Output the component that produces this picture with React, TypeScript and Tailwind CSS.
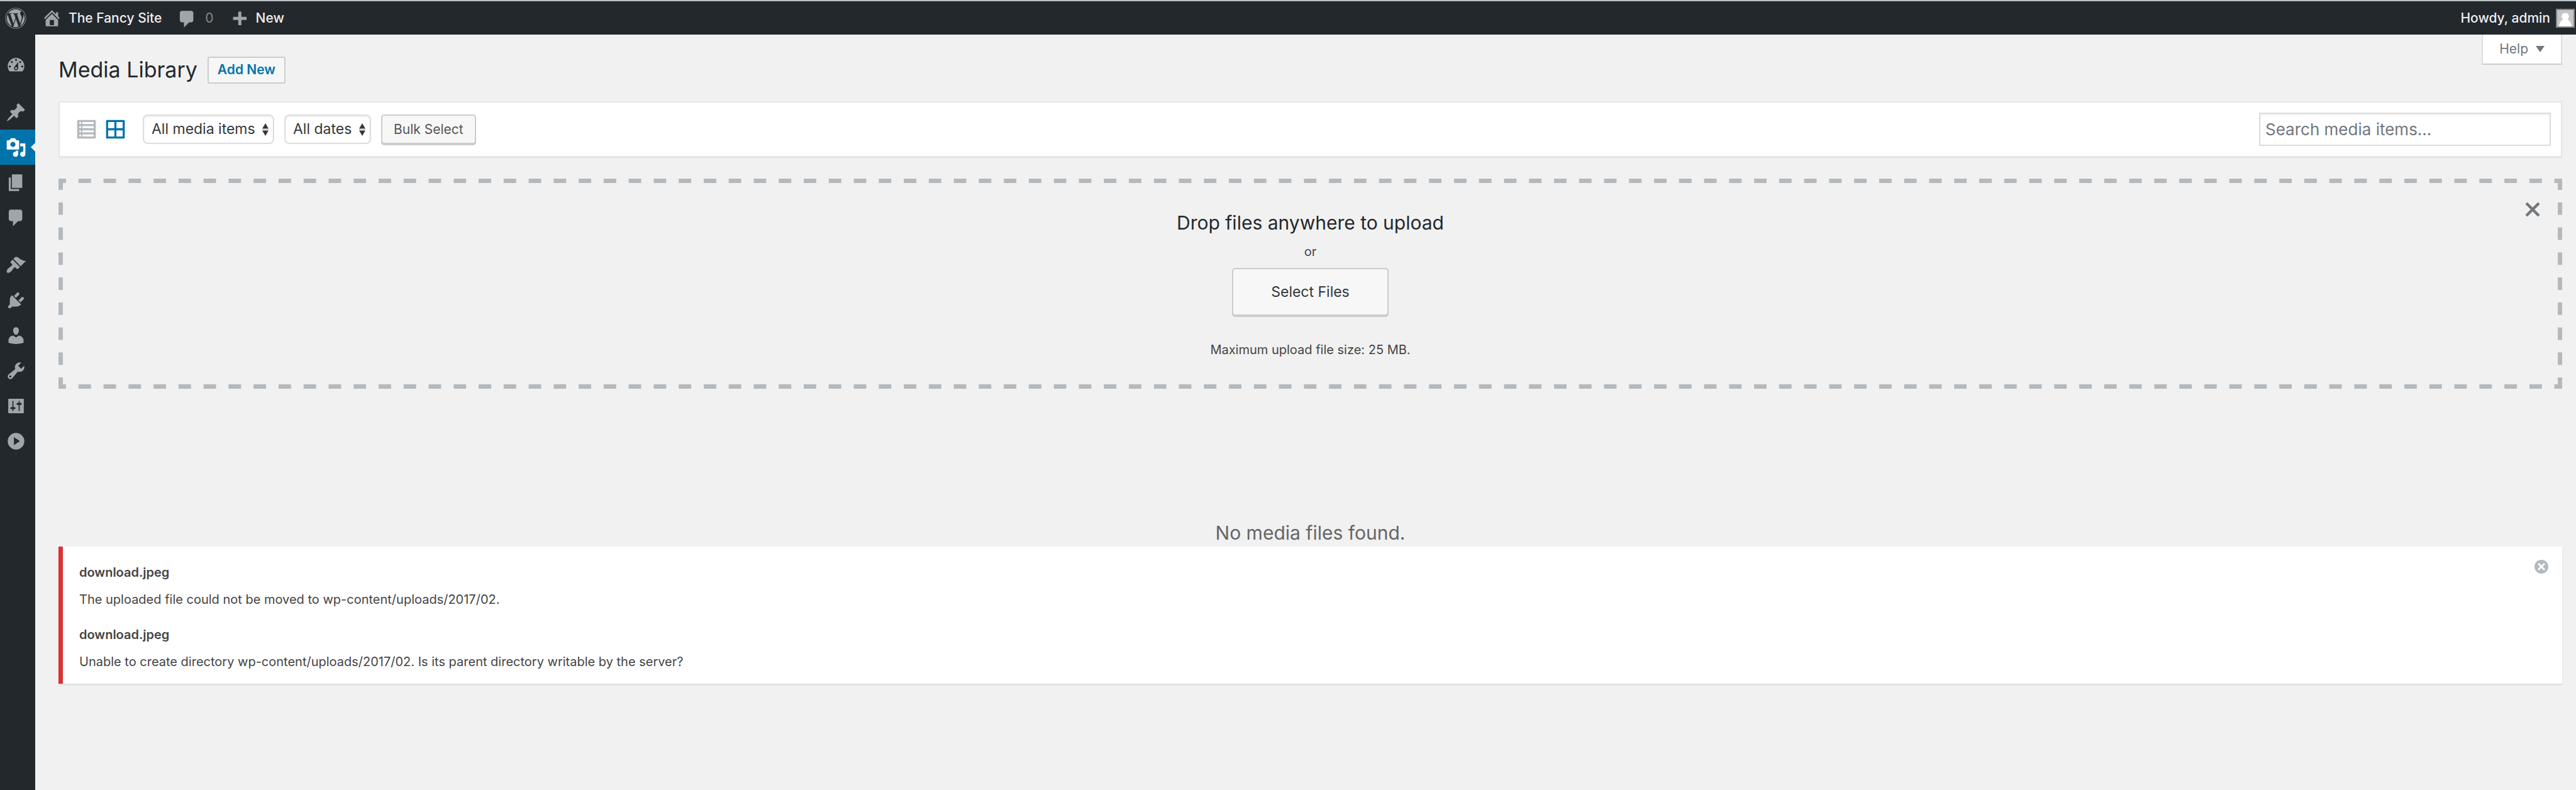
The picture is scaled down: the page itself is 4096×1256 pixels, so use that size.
import React from "react";
import { FaWordpress } from "react-icons/fa";

const icons = {
  home: "M16 8.5l1.53 1.53-1.06 1.06L10 4.6l-6.47 6.49-1.06-1.06L10 2.5l4 4v-2h2v4zm-6-2.46l6 5.99V18H4v-5.97zM12 17v-5H8v5h4z",
  plus: "M17 9v3h-5v5H9v-5H4V9h5V4h3v5h5z",
  dashboard:
    "M3.8 16h12.4c1.1-1.3 1.8-3 1.8-5 0-4.4-3.6-8-8-8s-8 3.6-8 8c0 2 .7 3.7 1.8 5zM10 4c.55 0 1 .45 1 1s-.45 1-1 1-1-.45-1-1 .45-1 1-1zM6 6c.55 0 1 .45 1 1s-.45 1-1 1-1-.45-1-1 .45-1 1-1zm8 0c.55 0 1 .45 1 1s-.45 1-1 1-1-.45-1-1 .45-1 1-1zm-5.37 5.55L12 7v6c0 1.1-.9 2-2 2s-2-.9-2-2c0-.57.24-1.08.63-1.45zM4 10.3c.55 0 1 .45 1 1s-.45 1-1 1-1-.45-1-1 .45-1 1-1zm12 0c.55 0 1 .45 1 1s-.45 1-1 1-1-.45-1-1 .45-1 1-1zm-5 2.7c0-.55-.45-1-1-1s-1 .45-1 1 .45 1 1 1 1-.45 1-1z",
  pin: "M10.44 3.02l1.82-1.82 6.36 6.35-1.83 1.82c-1.05-.68-2.48-.57-3.41.36l-.75.75c-.92.93-1.04 2.35-.35 3.41l-1.83 1.82-2.41-2.41-2.8 2.79c-.42.42-3.38 2.71-3.8 2.29s1.86-3.39 2.28-3.81l2.79-2.79L4.1 9.36l1.83-1.82c1.05.69 2.48.57 3.4-.36l.75-.75c.93-.92 1.05-2.35.36-3.41z",
  media:
    "M13 11V4c0-.55-.45-1-1-1h-1.67L9 1H5L3.67 3H2c-.55 0-1 .45-1 1v7c0 .55.45 1 1 1h10c.55 0 1-.45 1-1zM7 4.5c1.38 0 2.5 1.12 2.5 2.5S8.38 9.5 7 9.5 4.5 8.38 4.5 7 5.62 4.5 7 4.5zM14 6h5v10.5c0 1.38-1.12 2.5-2.5 2.5S14 17.88 14 16.5s1.12-2.5 2.5-2.5c.17 0 .34.02.5.05V9h-3V6zm-4 8.05V13h2v3.5c0 1.38-1.12 2.5-2.5 2.5S7 17.88 7 16.5 8.12 14 9.5 14c.17 0 .34.02.5.05z",
  page: "M6 15V2h10v13H6zm-1 1h8v2H3V5h2v11z",
  comment:
    "M5 2h9c1.1 0 2 .9 2 2v7c0 1.1-.9 2-2 2h-2l-5 5v-5H5c-1.1 0-2-.9-2-2V4c0-1.1.9-2 2-2z",
  appearance:
    "M14.48 11.06L7.41 3.99l1.5-1.5c.5-.56 2.3-.47 3.51.32 1.21.8 1.43 1.28 2.91 2.1 1.18.64 2.45 1.26 4.45.85zm-.71.71L6.7 4.7 4.93 6.47c-.39.39-.39 1.02 0 1.41l1.06 1.06c.39.39.39 1.03 0 1.42-.6.6-1.43 1.11-2.21 1.69-.35.26-.7.53-1.01.84C1.43 14.23.4 16.08 1.4 17.07c.99 1 2.84-.03 4.18-1.36.31-.31.58-.66.85-1.02.57-.78 1.08-1.61 1.69-2.21.39-.39 1.02-.39 1.41 0l1.06 1.06c.39.39 1.02.39 1.41 0z",
  plugins:
    "M13.11 4.36L9.87 7.6 8 5.73l3.24-3.24c.35-.34 1.05-.2 1.56.32.52.51.66 1.21.31 1.55zm-8 1.77l.91-1.12 9.01 9.01-1.19.84c-.71.71-2.63 1.16-3.82 1.16H6.14L4.9 17.26c-.59.59-1.54.59-2.12 0-.59-.58-.59-1.53 0-2.12l1.24-1.24v-3.88c0-1.13.4-3.19 1.09-3.89zm7.26 3.97l3.24-3.24c.34-.35 1.04-.21 1.55.31.52.51.66 1.21.31 1.55l-3.24 3.25z",
  users:
    "M10 9.25c-2.27 0-2.73-3.44-2.73-3.44C7 4.02 7.82 2 9.97 2c2.16 0 2.98 2.02 2.71 3.81 0 0-.41 3.44-2.68 3.44zm0 2.57L12.72 10c2.39 0 4.52 2.33 4.52 4.53v2.49s-3.65 1.13-7.24 1.13c-3.65 0-7.24-1.13-7.24-1.13v-2.49c0-2.25 1.94-4.48 4.47-4.48z",
  tools:
    "M16.68 9.77c-1.34 1.34-3.3 1.67-4.95.99l-5.41 6.52c-.99.99-2.59.99-3.58 0s-.99-2.59 0-3.57l6.52-5.42c-.68-1.65-.35-3.61.99-4.95 1.28-1.28 3.12-1.62 4.72-1.06l-2.89 2.89 2.82 2.82 2.86-2.87c.53 1.58.18 3.39-1.08 4.65zM3.81 16.21c.4.39 1.04.39 1.43 0 .4-.4.4-1.04 0-1.43-.39-.4-1.03-.4-1.43 0-.39.39-.39 1.03 0 1.43z",
  settings:
    "M17.5 16.3V3.7c0-.4-.3-.7-.7-.7H3.2c-.4 0-.7.3-.7.7v12.6c0 .4.3.7.7.7h13.6c.4 0 .7-.3.7-.7zM7.5 11H8.3c.7 0 1.2.45 1.2 1s-.5 1-1.2 1H7.5v1.5c0 .28-.22.5-.5.5s-.5-.22-.5-.5V13H5.7c-.7 0-1.2-.45-1.2-1s.5-1 1.2-1h.8V5.5c0-.28.22-.5.5-.5s.5.22.5.5V11zm5-2h-.8c-.7 0-1.2-.45-1.2-1s.5-1 1.2-1h.8V5.5c0-.28.22-.5.5-.5s.5.22.5.5V7h.8c.7 0 1.2.45 1.2 1s-.5 1-1.2 1h-.8v5.5c0 .28-.22.5-.5.5s-.5-.22-.5-.5V9z",
  collapse: "M10 2a8 8 0 100 16 8 8 0 000-16zM8 6l5.7 3.9L8 13.8z",
  list: "M2 1h16c.6 0 1 .4 1 1v16c0 .6-.4 1-1 1H2c-.6 0-1-.4-1-1V2c0-.6.4-1 1-1zM6 3v2h11V3zM6 7v2h11V7zM6 11v2h11v-2zM6 15v2h11v-2zM4 3a1 1 0 100 2 1 1 0 000-2zM4 7a1 1 0 100 2 1 1 0 000-2zM4 11a1 1 0 100 2 1 1 0 000-2zM4 15a1 1 0 100 2 1 1 0 000-2z",
  grid: "M2 1h16c.6 0 1 .4 1 1v16c0 .6-.4 1-1 1H2c-.6 0-1-.4-1-1V2c0-.6.4-1 1-1zM3 3v6h6V3zM11 3v6h6V3zM3 11v6h6v-6zM11 11v6h6v-6z",
};

type IconName = keyof typeof icons;

function Icon({ name }: { name: IconName }) {
  return (
    <svg viewBox="0 0 20 20" className="size-[33px] shrink-0 fill-current" aria-hidden="true">
      <path fillRule="evenodd" d={icons[name]} />
    </svg>
  );
}

const menuGroups: { name: IconName; label: string }[][] = [
  [{ name: "dashboard", label: "Dashboard" }],
  [
    { name: "pin", label: "Posts" },
    { name: "media", label: "Media" },
    { name: "page", label: "Pages" },
    { name: "comment", label: "Comments" },
  ],
  [
    { name: "appearance", label: "Appearance" },
    { name: "plugins", label: "Plugins" },
    { name: "users", label: "Users" },
    { name: "tools", label: "Tools" },
    { name: "settings", label: "Settings" },
    { name: "collapse", label: "Expand menu" },
  ],
];

function AdminBar() {
  return (
    <header className="flex h-[55px] items-center justify-between border-t-2 border-[#bcc2c6] bg-[#23282d] pl-2 pr-[2px] text-[21px] font-medium text-[#eee]">
      <nav aria-label="Toolbar" className="flex items-center">
        <a href="#wp" aria-label="About WordPress" className="text-[#a0a5aa]">
          <FaWordpress className="size-[34px]" />
        </a>
        <a href="#site" className="ml-6 flex items-center gap-[10px]">
          <span className="text-[#a0a5aa]"><Icon name="home" /></span>
          The Fancy Site
        </a>
        <a href="#comments" aria-label="0 comments" className="ml-6 flex items-center gap-3 text-[#82878c]">
          <span className="pt-1 text-[#a0a5aa]"><Icon name="comment" /></span>
          <span className="font-normal">0</span>
        </a>
        <a href="#new" className="ml-6 flex items-center gap-[10px]">
          <span className="text-[#a0a5aa]"><Icon name="plus" /></span>
          New
        </a>
      </nav>
      <a href="#profile" className="flex items-center gap-[9px]">
        Howdy, admin
        <svg viewBox="0 0 30 30" className="size-[30px]" aria-hidden="true">
          <rect width="30" height="30" fill="#82878c" />
          <rect x="2" y="2" width="26" height="26" fill="#c6c6c6" />
          <circle cx="15" cy="12.200" r="5.800" fill="#fff" />
          <path fill="#fff" d="M11.500 17h7c3.400 1.600 6 5.400 6.700 11H4.800c.7-5.600 3.300-9.400 6.700-11z" />
        </svg>
      </a>
    </header>
  );
}

function Sidebar() {
  return (
    <nav aria-label="Main menu" className="flex w-14 shrink-0 flex-col gap-[19px] bg-[#23282d] pt-5">
      {menuGroups.map((group, i) => (
        <ul key={i}>
          {group.map(({ name, label }) => (
            <li key={name}>
              <a
                href={"#" + name}
                aria-label={label}
                className={
                  name === "media"
                    ? "relative flex h-14 items-center bg-[#0073aa] pl-[9px] text-white"
                    : "flex h-14 items-center pl-[9px] text-[#a0a5aa]"
                }
              >
                <Icon name={name} />
                {name === "media" && (
                  <svg viewBox="0 0 7 14" className="absolute right-0 top-[21px] h-[14px] w-[7px]" aria-hidden="true">
                    <path fill="#f1f1f1" d="M7 0v14L0 7z" />
                  </svg>
                )}
              </a>
            </li>
          ))}
        </ul>
      ))}
    </nav>
  );
}

function Filter({ label, option, width }: { label: string; option: string; width: string }) {
  return (
    <div className={"relative " + width}>
      <select
        aria-label={label}
        className="h-[47px] w-full appearance-none rounded-[8px] border-2 border-[#ddd] bg-white pl-3 text-[23px] text-[#32373c] shadow-[inset_0_2px_3px_rgba(0,0,0,0.07)]"
      >
        <option>{option}</option>
      </select>
      <svg viewBox="0 0 10 20" className="pointer-events-none absolute right-[9px] top-[14px] h-5 w-[10px]" aria-hidden="true">
        <path fill="#32373c" d="M5 0l5 8.500H0zM5 20l5-8.500H0z" />
        <path fill="#c4c4c4" d="M0 9.400h10v1.200H0z" />
      </svg>
    </div>
  );
}

function Toolbar() {
  return (
    <section className="mt-[28px] flex h-[89px] items-center justify-between border-2 border-[#e5e5e5] bg-white pl-[26px] pr-4 shadow-[0_2px_2px_rgba(0,0,0,0.04)]">
      <div className="flex items-center">
        <button type="button" aria-label="List view" className="text-[#b4b9be]"><Icon name="list" /></button>
        <button type="button" aria-label="Grid view" className="ml-[13px] text-[#0073aa]"><Icon name="grid" /></button>
        <div className="ml-[27px] flex items-center gap-4">
          <Filter label="Filter by type" option="All media items" width="w-[209px]" />
          <Filter label="Filter by date" option="All dates" width="w-[138px]" />
          <button
            type="button"
            className="h-[47px] rounded-[5px] border-2 border-[#ccc] bg-[#f7f7f7] px-[18px] text-[21px] text-[#555] shadow-[0_2px_0_#ccc]"
          >
            Bulk Select
          </button>
        </div>
      </div>
      <input
        type="search"
        aria-label="Search media items"
        placeholder="Search media items..."
        className="h-[53px] w-[464px] border-2 border-[#ddd] bg-white px-2 text-[26px] shadow-[inset_0_2px_3px_rgba(0,0,0,0.07)] placeholder:text-[#72777c]"
      />
    </section>
  );
}

function DropZone() {
  return (
    <section className="relative mt-[34px] flex flex-col items-center border-x-2 border-y-8 border-transparent bg-[linear-gradient(90deg,#b4b9be_25%,transparent_25%_75%,#b4b9be_75%),linear-gradient(90deg,#b4b9be_25%,transparent_25%_75%,#b4b9be_75%),linear-gradient(#b4b9be_25%,transparent_25%_75%,#b4b9be_75%),linear-gradient(#b4b9be_25%,transparent_25%_75%,#b4b9be_75%)] [background-origin:padding-box] [background-position:0_-8px,0_calc(100%+8px),-2px_0,calc(100%+2px)_0] [background-repeat:round_no-repeat,round_no-repeat,no-repeat_round,no-repeat_round] [background-size:1%_7px,1%_7px,7px_12.5%,7px_12.5%] pb-[38px] pt-10">
      <h2 className="text-[30px] leading-[44px] text-[#23282d]">Drop files anywhere to upload</h2>
      <p className="mt-2 leading-8">or</p>
      <button
        type="button"
        className="mt-[10px] h-[76px] w-[249px] rounded-[5px] border-2 border-[#ccc] bg-[#f7f7f7] text-[23px] text-[#32373c] shadow-[0_2px_0_#ccc]"
      >
        Select Files
      </button>
      <p className="mt-[38px] leading-8">Maximum upload file size: 25 MB.</p>
      <button type="button" aria-label="Close uploader" className="absolute right-[33px] top-[29px]">
        <svg viewBox="0 0 24 24" className="size-6 stroke-[#72777c]" aria-hidden="true">
          <path strokeWidth="4.500" d="M2 2l20 20M22 2L2 22" />
        </svg>
      </button>
    </section>
  );
}

const errors = [
  { file: "download.jpeg", message: "The uploaded file could not be moved to wp-content/uploads/2017/02." },
  {
    file: "download.jpeg",
    message:
      "Unable to create directory wp-content/uploads/2017/02. Is its parent directory writable by the server?",
  },
];

function Notice() {
  return (
    <section
      role="alert"
      className="relative flex flex-col gap-6 border-l-[7px] border-[#dc3232] bg-white pb-[19px] pl-[26px] pt-[25px] shadow-[0_2px_2px_rgba(0,0,0,0.1)]"
    >
      {errors.map(({ file, message }) => (
        <div key={message} className="flex flex-col gap-[11px]">
          <strong className="leading-8 font-semibold">{file}</strong>
          <p className="leading-8">{message}</p>
        </div>
      ))}
      <button type="button" aria-label="Dismiss errors" className="absolute right-[22px] top-[21px]">
        <svg viewBox="0 0 22 22" className="size-[22px]" aria-hidden="true">
          <circle cx="11" cy="11" r="11" fill="#b4b9be" />
          <path stroke="#fff" strokeWidth="3" d="M6 6l10 10M16 6L6 16" />
        </svg>
      </button>
    </section>
  );
}

export default function App() {
  return (
    <div className="flex min-h-screen flex-col bg-[#f1f1f1] font-['Inter',sans-serif] text-[20px] text-[#444]">
      <AdminBar />
      <div className="flex flex-1">
        <Sidebar />
        <main className="relative min-w-0 flex-1 pl-[37px] pr-[22px] pt-[34px]">
          <div className="flex items-center gap-4">
            <h1 className="text-[34px] leading-[44px] text-[#23282d]">Media Library</h1>
            <a
              href="#add"
              className="flex h-[43px] items-center rounded-[3px] border-2 border-[#ccc] bg-[#f7f7f7] px-[14px] text-[21px] font-semibold text-[#0073aa]"
            >
              Add New
            </a>
          </div>
          <button
            type="button"
            className="absolute right-[22px] top-0 flex h-12 items-center gap-3 border-x-2 border-b-2 border-[#ddd] border-b-[#ccc] bg-white px-[26px] text-[21px] text-[#72777c]"
          >
            Help
            <svg viewBox="0 0 14 10" className="h-[10px] w-[14px] fill-current" aria-hidden="true">
              <path d="M0 0h14L7 10z" />
            </svg>
          </button>
          <Toolbar />
          <DropZone />
          <p className="mt-[207px] text-center text-[30px] leading-[44px] text-[#666]">No media files found.</p>
          <Notice />
        </main>
      </div>
    </div>
  );
}
